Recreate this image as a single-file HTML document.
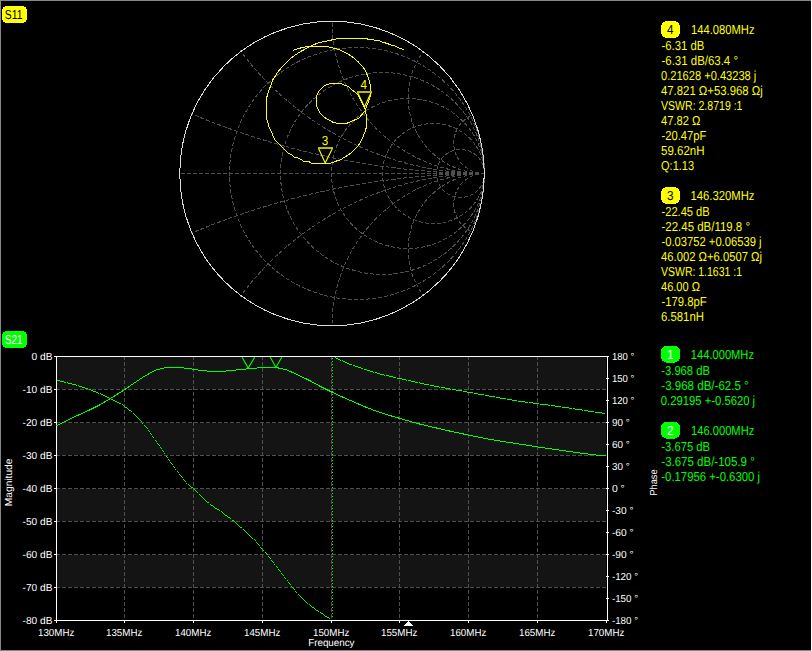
<!DOCTYPE html>
<html><head><meta charset="utf-8"><title>VNA</title>
<style>
html,body{margin:0;padding:0;background:#000;overflow:hidden}
svg{display:block}
text{font-family:"Liberation Sans",sans-serif;text-rendering:geometricPrecision}
</style></head><body>
<svg width="812" height="651" viewBox="0 0 812 651">
<rect x="0" y="0" width="812" height="651" fill="#000"/>
<g fill="none" stroke="#4f4f4f" stroke-width="1" stroke-dasharray="4 2" shape-rendering="crispEdges">
<path d="M180.75 173.5 H484.25"/>
<ellipse cx="357" cy="173.5" rx="127.5" ry="126"/>
<ellipse cx="382.5" cy="173.5" rx="102" ry="101"/>
<ellipse cx="408" cy="173.5" rx="76.5" ry="75"/>
<ellipse cx="433.5" cy="173.5" rx="51" ry="50"/>
<ellipse cx="460.5" cy="173.5" rx="24" ry="24"/>
<path d="M485.25 173.5 A761.25 761.25 0 0 1 190.96 113.64"/>
<path d="M485.25 173.5 A761.25 761.25 0 0 0 190.96 233.36"/>
<path d="M485.25 173.5 A304.50 304.50 0 0 1 240.15 50.40"/>
<path d="M485.25 173.5 A304.50 304.50 0 0 0 240.15 296.60"/>
<path d="M485.25 173.5 A152.25 152.25 0 0 1 332.00 21.25"/>
<path d="M485.25 173.5 A152.25 152.25 0 0 0 332.00 325.75"/>
<path d="M485.25 173.5 A76.12 76.12 0 0 1 423.35 51.70"/>
<path d="M485.25 173.5 A76.12 76.12 0 0 0 423.35 295.30"/>
<path d="M485.25 173.5 A30.45 30.45 0 0 1 472.54 114.94"/>
<path d="M485.25 173.5 A30.45 30.45 0 0 0 472.54 232.06"/>
</g>
<circle cx="332.0" cy="173.5" r="152.25" fill="none" stroke="#dadada" stroke-width="1" shape-rendering="crispEdges"/>
<path d="M293.1 50.5 L295.3 49.5 L299.3 48.3 L303.2 47.3 L308.6 46.6 L316.0 46.5 L322.0 46.6 L327.5 46.7 L331.0 47.5 L335.5 48.7 L339.9 49.9 L345.4 52.5 L350.9 55.9 L354.3 58.4 L357.6 61.3 L361.8 65.5 L364.7 69.6 L366.7 73.8 L368.4 77.9 L369.7 82.1 L370.5 86.2 L370.7 91.2 L370.5 95.3 L369.7 98.7 L368.0 102.8 L366.3 107.0 L365.4 110.5 L362.9 113.4 L359.0 118.0 L355.2 119.7 L350.6 121.8 L346.8 123.3 L342.0 123.5 L337.3 123.3 L333.0 122.2 L329.2 120.2 L325.4 117.9 L322.3 115.6 L319.6 112.2 L317.7 108.7 L316.5 106.0 L316.4 101.0 L316.5 96.4 L317.3 94.5 L318.4 91.8 L321.1 88.8 L323.8 86.1 L327.3 84.5 L330.7 83.5 L335.5 83.3 L340.7 83.6 L346.1 85.7 L348.9 86.9 L351.0 89.1 L354.3 91.6 L356.8 93.5 L359.3 97.0 L361.8 102.0 L363.8 106.1 L364.9 108.8 L365.6 112.6 L366.7 116.4 L366.8 121.0 L366.7 125.7 L365.6 130.3 L364.4 133.3 L362.5 138.0 L360.6 141.8 L358.3 145.6 L354.4 149.9 L349.1 154.5 L345.9 156.3 L343.9 157.5 L341.5 159.5 L337.5 160.6 L334.6 161.7 L331.6 162.7 L329.6 163.5 L321.0 163.6 L312.4 163.5 L310.4 162.7 L308.9 161.7 L303.5 161.2 L302.0 159.9 L298.6 158.3 L294.2 157.0 L291.7 154.7 L288.7 153.6 L284.8 149.8 L281.4 146.6 L277.4 142.4 L275.7 140.6 L274.5 139.1 L273.5 136.9 L272.5 134.4 L271.5 132.0 L270.5 130.3 L269.4 128.0 L268.4 124.8 L267.4 120.9 L266.5 118.0 L266.4 108.0 L266.4 98.3 L267.4 95.4 L268.3 91.4 L269.3 89.0 L270.5 86.7 L271.4 83.6 L272.6 80.2 L274.6 77.2 L277.3 72.8 L281.2 67.9 L283.7 65.4 L286.6 62.7 L289.9 58.9 L294.9 55.2 L299.8 52.0 L304.7 49.3 L309.6 46.6 L314.6 44.4 L319.5 42.4 L322.0 42.1 L325.1 41.4 L328.8 40.5 L334.3 39.5 L337.7 38.6 L345.0 38.5 L360.0 38.5 L366.2 38.6 L369.0 39.5 L372.3 39.6 L375.5 40.5 L378.5 40.6 L381.0 41.5 L383.4 42.5 L387.4 43.5 L390.8 45.0 L394.5 45.6 L397.6 47.2 L400.0 48.3 L402.5 49.4 L404.0 49.5" fill="none" stroke="#ffff00" stroke-linejoin="round" stroke-width="1" shape-rendering="crispEdges"/>
<path d="M357 92 H371.5" fill="none" stroke="#b8b800" stroke-width="2" shape-rendering="crispEdges"/>
<path d="M357.6 92.5 L364.5 107 L371.2 92.5" fill="none" stroke="#ffff00" stroke-width="1.15"/>
<path d="M318 148 H333" fill="none" stroke="#b8b800" stroke-width="2" shape-rendering="crispEdges"/>
<path d="M318.6 148.5 L325.2 163 L332.4 148.5" fill="none" stroke="#ffff00" stroke-width="1.15"/>
<text x="360.6" y="89" fill="#ffff00" font-size="13" textLength="6.5" lengthAdjust="spacingAndGlyphs">4</text>
<text x="321.8" y="145" fill="#ffff00" font-size="13" textLength="6.5" lengthAdjust="spacingAndGlyphs">3</text>
<rect x="57" y="357" width="549" height="32" fill="#141414"/>
<rect x="57" y="423" width="549" height="32" fill="#141414"/>
<rect x="57" y="489" width="549" height="32" fill="#141414"/>
<rect x="57" y="555" width="549" height="32" fill="#141414"/>
<g fill="none" stroke="#4f4f4f" stroke-width="1" stroke-dasharray="4 2" shape-rendering="crispEdges">
<path d="M56 389.5 H607"/>
<path d="M56 422.5 H607"/>
<path d="M56 455.5 H607"/>
<path d="M56 488.5 H607"/>
<path d="M56 521.5 H607"/>
<path d="M56 554.5 H607"/>
<path d="M56 587.5 H607"/>
<path d="M124.5 356 V620"/>
<path d="M193.5 356 V620"/>
<path d="M262.5 356 V620"/>
<path d="M331.5 356 V620"/>
<path d="M399.5 356 V620"/>
<path d="M468.5 356 V620"/>
<path d="M537.5 356 V620"/>
</g>
<g fill="none" stroke="#ffffff" stroke-width="1" shape-rendering="crispEdges">
<path d="M54 356.5 H609"/>
<path d="M56 620.5 H609"/>
<path d="M56.5 356 V623"/>
<path d="M607.5 356 V621"/>
<path d="M54 356.5 H56"/>
<path d="M54 389.5 H56"/>
<path d="M54 422.5 H56"/>
<path d="M54 455.5 H56"/>
<path d="M54 488.5 H56"/>
<path d="M54 521.5 H56"/>
<path d="M54 554.5 H56"/>
<path d="M54 587.5 H56"/>
<path d="M54 620.5 H56"/>
<path d="M606 356.5 H609"/>
<path d="M606 378.5 H609"/>
<path d="M606 400.5 H609"/>
<path d="M606 422.5 H609"/>
<path d="M606 444.5 H609"/>
<path d="M606 466.5 H609"/>
<path d="M606 488.5 H609"/>
<path d="M606 510.5 H609"/>
<path d="M606 532.5 H609"/>
<path d="M606 554.5 H609"/>
<path d="M606 576.5 H609"/>
<path d="M606 598.5 H609"/>
<path d="M606 620.5 H609"/>
<path d="M56.5 620 V623"/>
<path d="M124.5 620 V623"/>
<path d="M193.5 620 V623"/>
<path d="M262.5 620 V623"/>
<path d="M331.5 620 V623"/>
<path d="M399.5 620 V623"/>
<path d="M468.5 620 V623"/>
<path d="M537.5 620 V623"/>
<path d="M606.5 620 V623"/>
</g>
<g fill="none" stroke="#00ff00" stroke-width="1" shape-rendering="crispEdges">
<path d="M56.5 425.8 L67.5 420.3 L78.5 415.0 L89.5 410.0 L100.5 404.5 L111.5 397.8 L122.5 391.0 L133.5 383.5 L144.5 376.2 L155.5 370.1 L166.5 367.4 L177.5 367.4 L188.5 368.5 L199.5 370.3 L210.5 371.4 L221.5 371.5 L232.5 370.4 L243.5 369.3 L254.5 368.2 L265.5 367.5 L276.5 367.5 L287.5 370.2 L298.5 375.2 L309.5 380.5 L320.5 386.5 L331.5 392.0 L342.5 397.0 L353.5 401.8 L364.5 406.6 L375.5 410.9 L386.5 414.6 L397.5 417.7 L408.5 420.9 L419.5 424.0 L430.5 426.6 L441.5 429.2 L452.5 431.7 L463.5 434.0 L474.5 436.3 L485.5 438.6 L496.5 440.4 L507.5 442.2 L518.5 443.9 L529.5 445.6 L540.5 447.4 L551.5 448.9 L562.5 450.5 L573.5 452.1 L584.5 453.6 L595.5 455.0 L606.5 455.6"/>
<path d="M332.5 358 V617" stroke-dasharray="1 2"/>
</g>
<g fill="none" stroke="#00ff00" stroke-width="1.1">
<path d="M242 357 L248.2 368.1 L254.8 357"/>
<path d="M270.2 357 L275.9 367.4 L281.9 357"/>
</g>
<path d="M57 380h3v1h-3zM60 381h4v1h-4zM64 382h2v1h-2zM67 382h1v1h-1zM68 383h4v1h-4zM72 384h4v1h-4zM76 385h1v1h-1zM78 385h1v1h-1zM79 386h3v1h-3zM82 387h3v1h-3zM85 388h3v1h-3zM89 389h2v1h-2zM91 390h2v1h-2zM93 391h3v1h-3zM96 392h2v1h-2zM98 393h1v1h-1zM100 393h1v1h-1zM101 394h2v1h-2zM103 395h2v1h-2zM105 396h2v1h-2zM107 397h2v1h-2zM109 398h1v1h-1zM111 399h2v1h-2zM113 400h2v1h-2zM115 401h2v1h-2zM117 402h2v1h-2zM119 403h2v1h-2zM122 404h1v1h-1zM123 405h1v1h-1zM124 406h1v1h-1zM125 407h2v1h-2zM127 408h1v1h-1zM128 409h1v1h-1zM129 410h2v1h-2zM131 411h1v1h-1zM133 413h1v1h-1zM134 414h1v1h-1zM135 415h1v1h-1zM136 416h1v1h-1zM137 417h1v1h-1zM138 418h1v1h-1zM139 419h1v1h-1zM140 420h1v1h-1zM141 421h1v1h-1zM142 423h1v1h-1zM144 425h1v1h-1zM145 426h1v1h-1zM146 427h1v1h-1zM147 428h1v1h-1zM148 430h1v1h-1zM149 431h1v1h-1zM150 433h1v1h-1zM151 434h1v1h-1zM152 436h1v1h-1zM153 437h1v1h-1zM155 440h1v1h-1zM156 441h1v1h-1zM157 443h1v1h-1zM158 444h1v1h-1zM159 445h1v1h-1zM160 447h1v1h-1zM161 448h1v1h-1zM162 450h1v1h-1zM163 451h1v1h-1zM164 453h1v1h-1zM166 456h1v1h-1zM167 457h1v1h-1zM168 459h1v1h-1zM169 460h1v1h-1zM170 462h1v1h-1zM171 463h1v1h-1zM172 464h1v1h-1zM173 466h1v1h-1zM174 467h1v1h-1zM175 469h1v1h-1zM177 471h1v1h-1zM178 472h1v1h-1zM179 474h1v1h-1zM180 475h1v1h-1zM181 476h1v1h-1zM182 477h1v1h-1zM183 479h1v1h-1zM184 480h1v1h-1zM185 481h1v1h-1zM186 483h1v1h-1zM188 484h1v1h-1zM189 485h1v1h-1zM190 486h1v1h-1zM191 487h2v1h-2zM193 488h1v1h-1zM194 489h1v1h-1zM195 490h1v1h-1zM196 491h1v1h-1zM197 492h1v1h-1zM199 494h1v1h-1zM200 495h1v1h-1zM201 496h1v1h-1zM202 497h1v1h-1zM203 498h1v1h-1zM204 499h1v1h-1zM205 500h1v1h-1zM206 501h1v1h-1zM207 502h2v1h-2zM210 504h1v1h-1zM211 505h2v1h-2zM213 506h1v1h-1zM214 507h1v1h-1zM215 508h2v1h-2zM217 509h2v1h-2zM219 510h1v1h-1zM221 511h1v1h-1zM222 512h1v1h-1zM223 513h1v1h-1zM224 514h1v1h-1zM225 515h2v1h-2zM227 516h1v1h-1zM228 517h2v1h-2zM230 518h1v1h-1zM232 520h2v1h-2zM234 521h1v1h-1zM235 522h1v1h-1zM236 523h1v1h-1zM237 524h1v1h-1zM238 525h1v1h-1zM239 526h1v1h-1zM240 527h2v1h-2zM243 529h1v1h-1zM244 530h1v1h-1zM245 531h1v1h-1zM246 532h1v1h-1zM247 533h1v1h-1zM248 534h1v1h-1zM249 535h1v1h-1zM250 536h1v1h-1zM251 537h1v1h-1zM252 538h1v1h-1zM254 539h1v1h-1zM255 540h1v1h-1zM256 542h1v1h-1zM257 543h1v1h-1zM258 544h1v1h-1zM259 545h1v1h-1zM260 547h1v1h-1zM261 548h1v1h-1zM262 549h1v1h-1zM263 550h1v1h-1zM265 552h1v1h-1zM266 553h1v1h-1zM267 554h1v1h-1zM268 556h1v1h-1zM269 557h1v1h-1zM270 558h1v1h-1zM271 560h1v1h-1zM272 561h1v1h-1zM273 562h1v1h-1zM274 564h1v1h-1zM276 566h1v1h-1zM277 567h1v1h-1zM278 569h1v1h-1zM279 570h1v1h-1zM280 571h1v1h-1zM281 573h1v1h-1zM282 574h1v1h-1zM283 575h1v1h-1zM284 577h1v1h-1zM285 578h1v1h-1zM287 580h1v1h-1zM288 582h1v1h-1zM289 583h1v1h-1zM290 584h1v1h-1zM291 586h1v1h-1zM292 587h1v1h-1zM293 588h1v1h-1zM294 589h1v1h-1zM295 591h1v1h-1zM296 592h1v1h-1zM298 594h1v1h-1zM299 595h1v1h-1zM300 596h1v1h-1zM301 597h1v1h-1zM302 598h1v1h-1zM303 599h1v1h-1zM304 600h1v1h-1zM305 601h1v1h-1zM306 602h1v1h-1zM307 603h1v1h-1zM309 604h1v1h-1zM310 605h1v1h-1zM311 606h1v1h-1zM312 607h2v1h-2zM314 608h1v1h-1zM315 609h1v1h-1zM316 610h2v1h-2zM318 611h1v1h-1zM320 612h1v1h-1zM321 613h2v1h-2zM323 614h1v1h-1zM324 615h1v1h-1zM325 616h2v1h-2zM327 617h2v1h-2zM329 618h1v1h-1zM335 357h1v1h-1zM336 358h2v1h-2zM338 359h2v1h-2zM340 360h1v1h-1zM342 360h1v1h-1zM343 361h2v1h-2zM345 362h2v1h-2zM347 363h2v1h-2zM349 364h3v1h-3zM353 365h2v1h-2zM355 366h3v1h-3zM358 367h3v1h-3zM361 368h2v1h-2zM364 369h3v1h-3zM367 370h3v1h-3zM370 371h3v1h-3zM373 372h1v1h-1zM375 372h2v1h-2zM377 373h3v1h-3zM380 374h4v1h-4zM384 375h1v1h-1zM386 375h3v1h-3zM389 376h4v1h-4zM393 377h3v1h-3zM397 378h5v1h-5zM402 379h4v1h-4zM406 380h1v1h-1zM408 380h3v1h-3zM411 381h4v1h-4zM415 382h3v1h-3zM419 382h1v1h-1zM420 383h4v1h-4zM424 384h5v1h-5zM430 385h4v1h-4zM434 386h5v1h-5zM439 387h1v1h-1zM441 387h4v1h-4zM445 388h5v1h-5zM450 389h1v1h-1zM452 389h4v1h-4zM456 390h6v1h-6zM463 391h4v1h-4zM467 392h6v1h-6zM474 393h4v1h-4zM478 394h6v1h-6zM485 395h4v1h-4zM489 396h6v1h-6zM496 397h4v1h-4zM500 398h6v1h-6zM507 399h5v1h-5zM512 400h5v1h-5zM518 401h7v1h-7zM525 402h3v1h-3zM529 402h4v1h-4zM533 403h6v1h-6zM540 404h8v1h-8zM548 405h2v1h-2zM551 405h4v1h-4zM555 406h6v1h-6zM562 407h7v1h-7zM569 408h3v1h-3zM573 408h2v1h-2zM575 409h7v1h-7zM582 410h1v1h-1zM584 410h4v1h-4zM588 411h6v1h-6zM595 412h7v1h-7zM602 413h3v1h-3z" fill="#00ff00" shape-rendering="crispEdges"/>
<path d="M408 621h1v1h1v1h1v1h1v1h1v1h-9v-1h1v-1h1v-1h1v-1h1z" fill="#ffffff" shape-rendering="crispEdges"/>
<rect x="2" y="6" width="25" height="17" rx="5" ry="5" fill="#ffff00" shape-rendering="crispEdges"/>
<text x="4.8" y="19" fill="#000" font-size="13" textLength="17.6" lengthAdjust="spacingAndGlyphs">S11</text>
<rect x="2" y="331" width="25" height="17" rx="5" ry="5" fill="#00ff00" shape-rendering="crispEdges"/>
<text x="4.8" y="344" fill="#fff" font-size="13" textLength="17.6" lengthAdjust="spacingAndGlyphs">S21</text>
<text x="31.5" y="360" fill="#fff" font-size="10.2" text-anchor="start" textLength="21.0" lengthAdjust="spacingAndGlyphs">0 dB</text>
<text x="22.6" y="393" fill="#fff" font-size="10.2" text-anchor="start" textLength="29.9" lengthAdjust="spacingAndGlyphs">-10 dB</text>
<text x="22.6" y="426" fill="#fff" font-size="10.2" text-anchor="start" textLength="29.9" lengthAdjust="spacingAndGlyphs">-20 dB</text>
<text x="22.6" y="459" fill="#fff" font-size="10.2" text-anchor="start" textLength="29.9" lengthAdjust="spacingAndGlyphs">-30 dB</text>
<text x="22.6" y="492" fill="#fff" font-size="10.2" text-anchor="start" textLength="29.9" lengthAdjust="spacingAndGlyphs">-40 dB</text>
<text x="22.6" y="525" fill="#fff" font-size="10.2" text-anchor="start" textLength="29.9" lengthAdjust="spacingAndGlyphs">-50 dB</text>
<text x="22.6" y="558" fill="#fff" font-size="10.2" text-anchor="start" textLength="29.9" lengthAdjust="spacingAndGlyphs">-60 dB</text>
<text x="22.6" y="591" fill="#fff" font-size="10.2" text-anchor="start" textLength="29.9" lengthAdjust="spacingAndGlyphs">-70 dB</text>
<text x="22.6" y="624" fill="#fff" font-size="10.2" text-anchor="start" textLength="29.9" lengthAdjust="spacingAndGlyphs">-80 dB</text>
<text x="611.9" y="360" fill="#fff" font-size="10.2" text-anchor="start" textLength="22.4" lengthAdjust="spacingAndGlyphs">180 °</text>
<text x="611.9" y="382" fill="#fff" font-size="10.2" text-anchor="start" textLength="22.4" lengthAdjust="spacingAndGlyphs">150 °</text>
<text x="611.9" y="404" fill="#fff" font-size="10.2" text-anchor="start" textLength="22.4" lengthAdjust="spacingAndGlyphs">120 °</text>
<text x="611.9" y="426" fill="#fff" font-size="10.2" text-anchor="start" textLength="17.7" lengthAdjust="spacingAndGlyphs">90 °</text>
<text x="611.9" y="448" fill="#fff" font-size="10.2" text-anchor="start" textLength="17.7" lengthAdjust="spacingAndGlyphs">60 °</text>
<text x="611.9" y="470" fill="#fff" font-size="10.2" text-anchor="start" textLength="17.7" lengthAdjust="spacingAndGlyphs">30 °</text>
<text x="611.9" y="492" fill="#fff" font-size="10.2" text-anchor="start" textLength="12.9" lengthAdjust="spacingAndGlyphs">0 °</text>
<text x="611.9" y="514" fill="#fff" font-size="10.2" text-anchor="start" textLength="21.6" lengthAdjust="spacingAndGlyphs">-30 °</text>
<text x="611.9" y="536" fill="#fff" font-size="10.2" text-anchor="start" textLength="21.6" lengthAdjust="spacingAndGlyphs">-60 °</text>
<text x="611.9" y="558" fill="#fff" font-size="10.2" text-anchor="start" textLength="21.6" lengthAdjust="spacingAndGlyphs">-90 °</text>
<text x="611.9" y="580" fill="#fff" font-size="10.2" text-anchor="start" textLength="26.3" lengthAdjust="spacingAndGlyphs">-120 °</text>
<text x="611.9" y="602" fill="#fff" font-size="10.2" text-anchor="start" textLength="26.3" lengthAdjust="spacingAndGlyphs">-150 °</text>
<text x="611.9" y="624" fill="#fff" font-size="10.2" text-anchor="start" textLength="26.3" lengthAdjust="spacingAndGlyphs">-180 °</text>
<text x="38.0" y="636" fill="#fff" font-size="10.2" text-anchor="start" textLength="36.3" lengthAdjust="spacingAndGlyphs">130MHz</text>
<text x="106.0" y="636" fill="#fff" font-size="10.2" text-anchor="start" textLength="36.3" lengthAdjust="spacingAndGlyphs">135MHz</text>
<text x="175.0" y="636" fill="#fff" font-size="10.2" text-anchor="start" textLength="36.3" lengthAdjust="spacingAndGlyphs">140MHz</text>
<text x="244.0" y="636" fill="#fff" font-size="10.2" text-anchor="start" textLength="36.3" lengthAdjust="spacingAndGlyphs">145MHz</text>
<text x="313.0" y="636" fill="#fff" font-size="10.2" text-anchor="start" textLength="36.3" lengthAdjust="spacingAndGlyphs">150MHz</text>
<text x="381.0" y="636" fill="#fff" font-size="10.2" text-anchor="start" textLength="36.3" lengthAdjust="spacingAndGlyphs">155MHz</text>
<text x="450.0" y="636" fill="#fff" font-size="10.2" text-anchor="start" textLength="36.3" lengthAdjust="spacingAndGlyphs">160MHz</text>
<text x="519.0" y="636" fill="#fff" font-size="10.2" text-anchor="start" textLength="36.3" lengthAdjust="spacingAndGlyphs">165MHz</text>
<text x="588.0" y="636" fill="#fff" font-size="10.2" text-anchor="start" textLength="36.3" lengthAdjust="spacingAndGlyphs">170MHz</text>
<text x="308.2" y="646" fill="#fff" font-size="10.2" text-anchor="start" textLength="46.3" lengthAdjust="spacingAndGlyphs">Frequency</text>
<text x="0" y="0" fill="#fff" font-size="10.2" text-anchor="middle" textLength="47.5" lengthAdjust="spacingAndGlyphs" transform="translate(11.5 482.4) rotate(-90)">Magnitude</text>
<text x="0" y="0" fill="#fff" font-size="10.2" text-anchor="middle" textLength="26.0" lengthAdjust="spacingAndGlyphs" transform="translate(656.7 482.5) rotate(-90)">Phase</text>
<rect x="661" y="21" width="19" height="17" rx="6" ry="6" fill="#ffff00" shape-rendering="crispEdges"/>
<text x="667" y="34" fill="#000" font-size="13" text-anchor="start" textLength="6.5" lengthAdjust="spacingAndGlyphs">4</text>
<text x="691.0" y="34" fill="#ffff00" font-size="13.0" text-anchor="start" textLength="63.5" lengthAdjust="spacingAndGlyphs">144.080MHz</text>
<text x="661.5" y="50" fill="#ffff00" font-size="13.0" text-anchor="start" textLength="42.8" lengthAdjust="spacingAndGlyphs">-6.31 dB</text>
<text x="661.5" y="65" fill="#ffff00" font-size="13.0" text-anchor="start" textLength="76.5" lengthAdjust="spacingAndGlyphs">-6.31 dB/63.4 °</text>
<text x="661.0" y="80" fill="#ffff00" font-size="13.0" text-anchor="start" textLength="95.3" lengthAdjust="spacingAndGlyphs">0.21628 +0.43238 j</text>
<text x="661.0" y="95" fill="#ffff00" font-size="13.0" text-anchor="start" textLength="101.8" lengthAdjust="spacingAndGlyphs">47.821 Ω+53.968 Ωj</text>
<text x="661.0" y="110" fill="#ffff00" font-size="13.0" text-anchor="start" textLength="81.5" lengthAdjust="spacingAndGlyphs">VSWR: 2.8719 :1</text>
<text x="661.0" y="125" fill="#ffff00" font-size="13.0" text-anchor="start" textLength="39.4" lengthAdjust="spacingAndGlyphs">47.82 Ω</text>
<text x="661.5" y="140" fill="#ffff00" font-size="13.0" text-anchor="start" textLength="44.8" lengthAdjust="spacingAndGlyphs">-20.47pF</text>
<text x="661.0" y="155" fill="#ffff00" font-size="13.0" text-anchor="start" textLength="43.5" lengthAdjust="spacingAndGlyphs">59.62nH</text>
<text x="661.0" y="170" fill="#ffff00" font-size="13.0" text-anchor="start" textLength="33.1" lengthAdjust="spacingAndGlyphs">Q:1.13</text>
<rect x="661" y="187" width="19" height="17" rx="6" ry="6" fill="#ffff00" shape-rendering="crispEdges"/>
<text x="667" y="200" fill="#000" font-size="13" text-anchor="start" textLength="6.5" lengthAdjust="spacingAndGlyphs">3</text>
<text x="690.4" y="200" fill="#ffff00" font-size="13.0" text-anchor="start" textLength="64.1" lengthAdjust="spacingAndGlyphs">146.320MHz</text>
<text x="661.5" y="216" fill="#ffff00" font-size="13.0" text-anchor="start" textLength="48.2" lengthAdjust="spacingAndGlyphs">-22.45 dB</text>
<text x="661.5" y="231" fill="#ffff00" font-size="13.0" text-anchor="start" textLength="88.5" lengthAdjust="spacingAndGlyphs">-22.45 dB/119.8 °</text>
<text x="661.5" y="246" fill="#ffff00" font-size="13.0" text-anchor="start" textLength="100.0" lengthAdjust="spacingAndGlyphs">-0.03752 +0.06539 j</text>
<text x="661.0" y="261" fill="#ffff00" font-size="13.0" text-anchor="start" textLength="101.0" lengthAdjust="spacingAndGlyphs">46.002 Ω+6.0507 Ωj</text>
<text x="661.0" y="276" fill="#ffff00" font-size="13.0" text-anchor="start" textLength="81.0" lengthAdjust="spacingAndGlyphs">VSWR: 1.1631 :1</text>
<text x="661.0" y="291" fill="#ffff00" font-size="13.0" text-anchor="start" textLength="39.0" lengthAdjust="spacingAndGlyphs">46.00 Ω</text>
<text x="661.5" y="306" fill="#ffff00" font-size="13.0" text-anchor="start" textLength="45.2" lengthAdjust="spacingAndGlyphs">-179.8pF</text>
<text x="661.0" y="321" fill="#ffff00" font-size="13.0" text-anchor="start" textLength="42.9" lengthAdjust="spacingAndGlyphs">6.581nH</text>
<rect x="661" y="345.7" width="19" height="17" rx="6" ry="6" fill="#00ff00" shape-rendering="crispEdges"/>
<text x="667" y="358.7" fill="#fff" font-size="13" text-anchor="start" textLength="6.5" lengthAdjust="spacingAndGlyphs">1</text>
<text x="690.8" y="358.7" fill="#00ff00" font-size="13.0" text-anchor="start" textLength="63.2" lengthAdjust="spacingAndGlyphs">144.000MHz</text>
<text x="661.3" y="374.7" fill="#00ff00" font-size="13.0" text-anchor="start" textLength="48.6" lengthAdjust="spacingAndGlyphs">-3.968 dB</text>
<text x="661.3" y="389.7" fill="#00ff00" font-size="13.0" text-anchor="start" textLength="87.4" lengthAdjust="spacingAndGlyphs">-3.968 dB/-62.5 °</text>
<text x="660.8" y="404.7" fill="#00ff00" font-size="13.0" text-anchor="start" textLength="94.3" lengthAdjust="spacingAndGlyphs">0.29195 +-0.5620 j</text>
<rect x="661" y="421.7" width="19" height="17" rx="6" ry="6" fill="#00ff00" shape-rendering="crispEdges"/>
<text x="667" y="434.7" fill="#fff" font-size="13" text-anchor="start" textLength="6.5" lengthAdjust="spacingAndGlyphs">2</text>
<text x="691.0" y="434.7" fill="#00ff00" font-size="13.0" text-anchor="start" textLength="63.3" lengthAdjust="spacingAndGlyphs">146.000MHz</text>
<text x="661.3" y="450.7" fill="#00ff00" font-size="13.0" text-anchor="start" textLength="48.7" lengthAdjust="spacingAndGlyphs">-3.675 dB</text>
<text x="661.3" y="465.7" fill="#00ff00" font-size="13.0" text-anchor="start" textLength="93.5" lengthAdjust="spacingAndGlyphs">-3.675 dB/-105.9 °</text>
<text x="661.3" y="480.7" fill="#00ff00" font-size="13.0" text-anchor="start" textLength="98.7" lengthAdjust="spacingAndGlyphs">-0.17956 +-0.6300 j</text>
<!-- window borders -->
<rect x="0" y="0" width="812" height="1" fill="#828790"/>
<rect x="0" y="0" width="1" height="651" fill="#828790"/>
<rect x="0" y="650" width="812" height="1" fill="#828790"/>
<rect x="811" y="0" width="1" height="651" fill="#ffffff"/>
</svg>
</body></html>
